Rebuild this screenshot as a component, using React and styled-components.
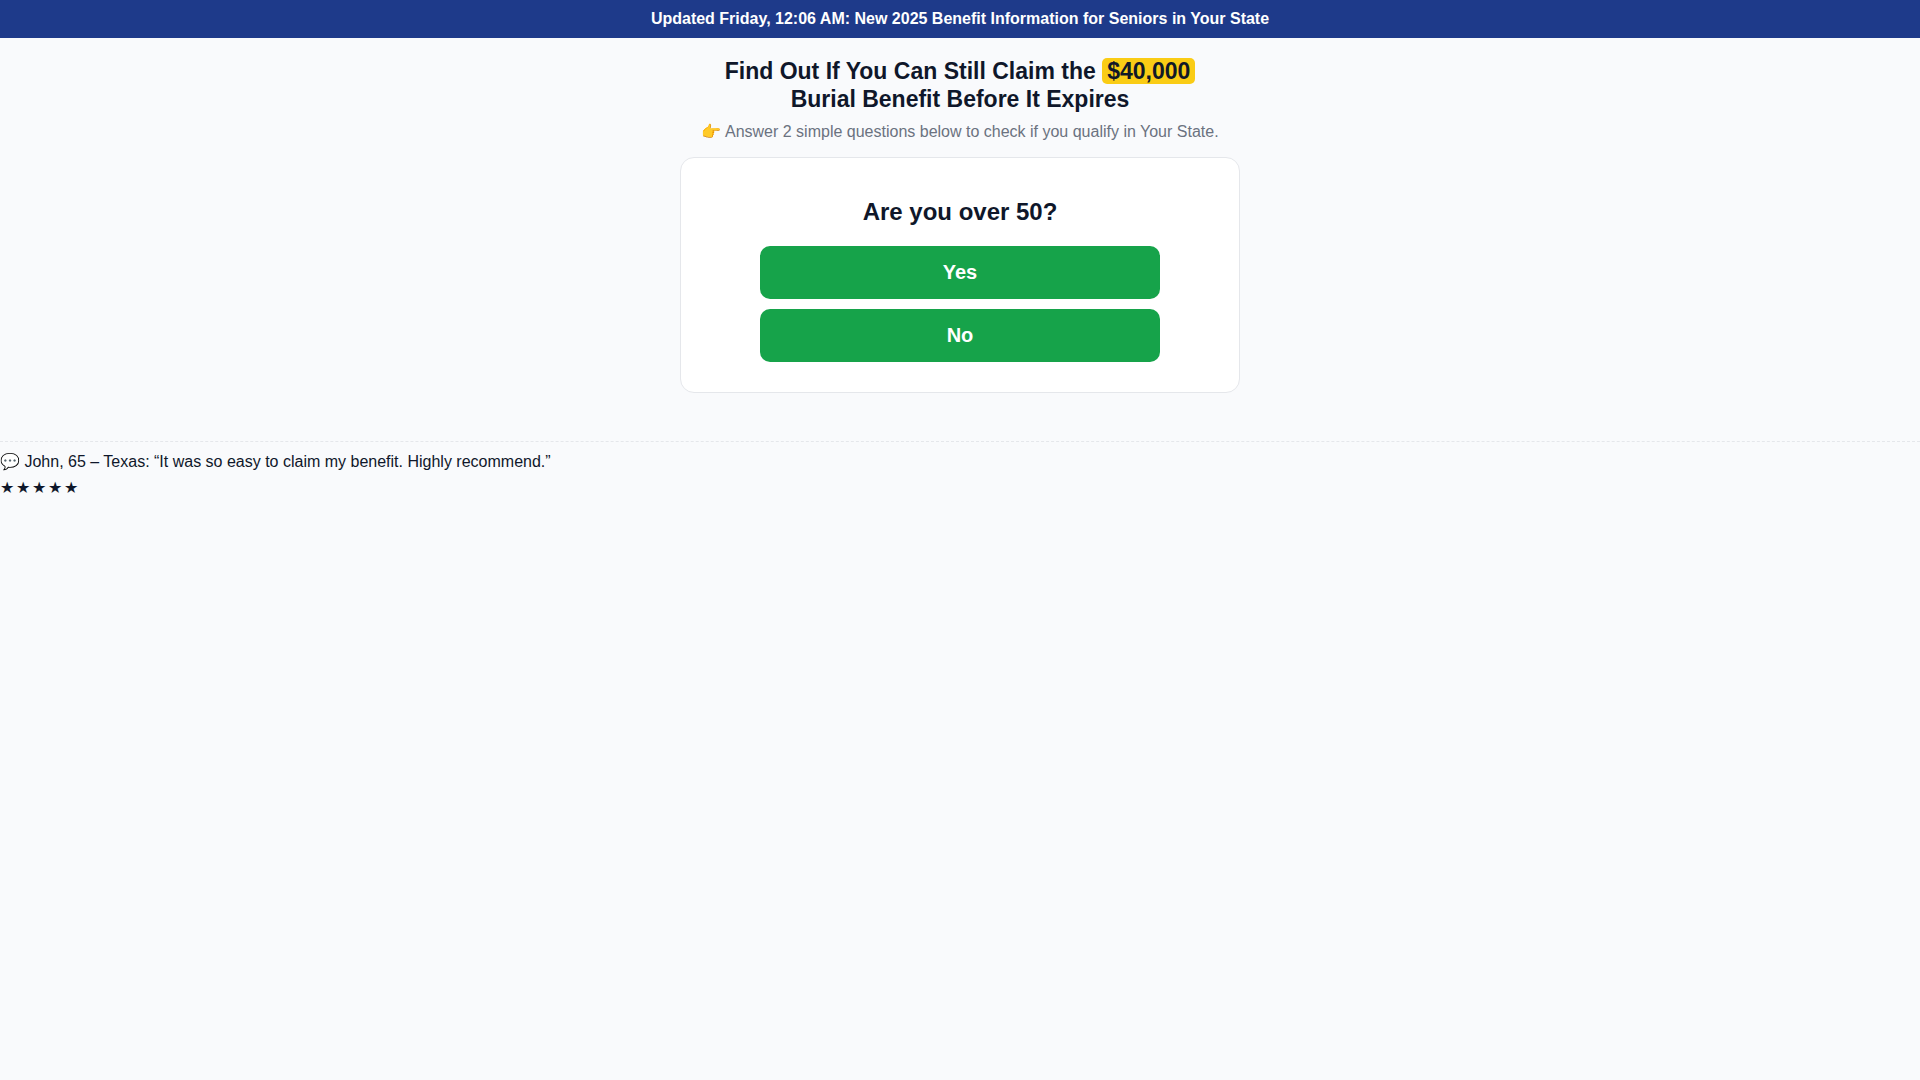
import React from "react";
import styled, { createGlobalStyle } from "styled-components";

const GlobalStyle = createGlobalStyle`
  *, *::before, *::after { box-sizing: border-box; }
  body {
    margin: 0;
    background: #f9fafc;
    color: #0f172a;
    font-family: "Liberation Sans", Arial, sans-serif;
    font-size: 16px;
    line-height: 26px;
  }
`;

const UpdateBar = styled.div`
  padding: 6px 16px;
  background: #1e3a8a;
  color: #fff;
  font-weight: 700;
  text-align: center;
`;

const Main = styled.main`
  max-width: 600px;
  margin: 0 auto;
  padding: 19px 20px 20px;
  text-align: center;
`;

const Headline = styled.h1`
  margin: 0 0 6px;
  font-size: 23px;
  line-height: 28px;
`;

const Highlight = styled.span`
  padding: 0 5px;
  border-radius: 5px;
  background: #facc15;
  color: #111827;
`;

const Intro = styled.p`
  margin: 0 0 12px;
  color: #6b7280;
`;

const Card = styled.section`
  padding: 30px 20px;
  border: 1px solid #e5e7eb;
  border-radius: 14px;
  background: #fff;
`;

const Question = styled.h2`
  margin: 5px 0 15px;
  font-size: 24px;
  line-height: 38px;
`;

const Answers = styled.div`
  display: grid;
  gap: 10px;
  max-width: 400px;
  margin: 0 auto;
`;

const AnswerButton = styled.button`
  padding: 15px;
  border: 0;
  border-radius: 10px;
  background: #16a34a;
  color: #fff;
  font: 700 20px/23px "Liberation Sans", Arial, sans-serif;
  cursor: pointer;
`;

const Testimonial = styled.footer`
  margin-top: 28px;
  padding: 7px 0;
  border-top: 1px dashed #e5e7eb;
`;

const Stars = styled.div`
  display: flex;
  gap: 2px;
`;

export default function App() {
  return (
    <>
      <GlobalStyle />
      <UpdateBar>Updated Friday, 12:06 AM: New 2025 Benefit Information for Seniors in Your State</UpdateBar>
      <Main>
        <Headline>
          Find Out If You Can Still Claim the <Highlight>$40,000</Highlight>
          <br />
          Burial Benefit Before It Expires
        </Headline>
        <Intro>👉 Answer 2 simple questions below to check if you qualify in Your State.</Intro>
        <Card>
          <Question>Are you over 50?</Question>
          <Answers>
            <AnswerButton type="button">Yes</AnswerButton>
            <AnswerButton type="button">No</AnswerButton>
          </Answers>
        </Card>
      </Main>
      <Testimonial>
        <div>💬 John, 65 – Texas: “It was so easy to claim my benefit. Highly recommend.”</div>
        <Stars>
          {[1, 2, 3, 4, 5].map((star) => (
            <span key={star}>★</span>
          ))}
        </Stars>
      </Testimonial>
    </>
  );
}
